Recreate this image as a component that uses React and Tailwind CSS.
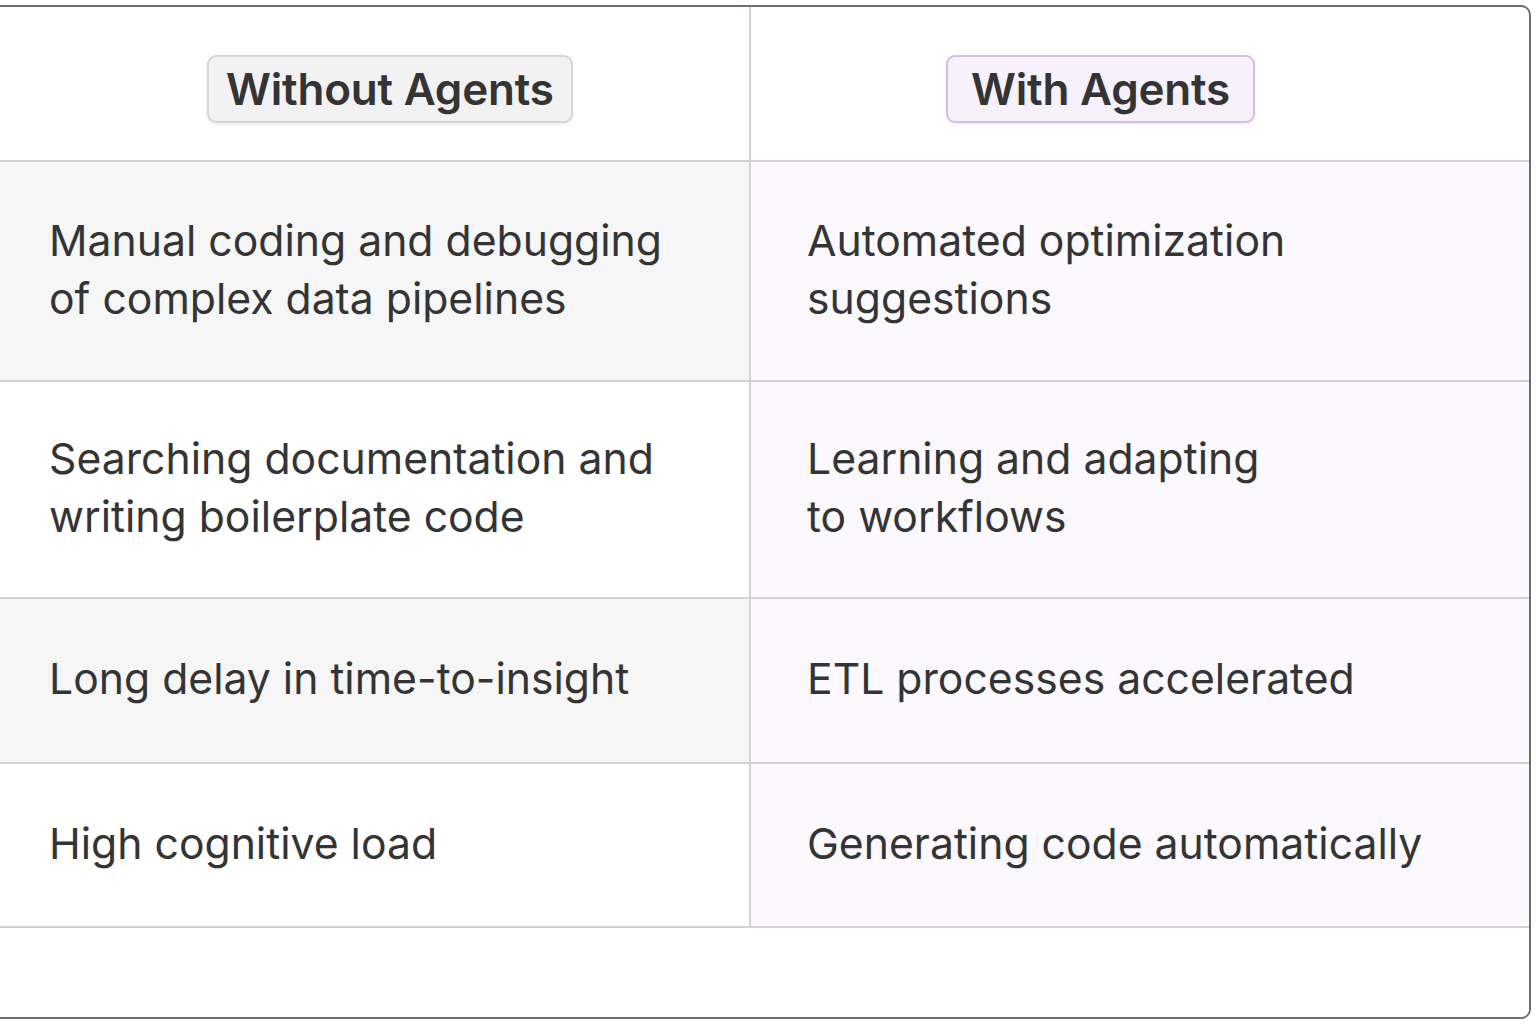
const ROWS = [
  {
    left: ["Manual coding and debugging", "of complex data pipelines"],
    right: ["Automated optimization", "suggestions"],
    h: "h-[220px]",
    shade: true,
  },
  {
    left: ["Searching documentation and", "writing boilerplate code"],
    right: ["Learning and adapting", "to workflows"],
    h: "h-[217px]",
    shade: false,
  },
  {
    left: ["Long delay in time-to-insight"],
    right: ["ETL processes accelerated"],
    h: "h-[165px]",
    shade: true,
  },
  {
    left: ["High cognitive load"],
    right: ["Generating code automatically"],
    h: "h-[164px]",
    shade: false,
  },
];

export default function App() {
  return (
    <div
      className="w-[1536px] h-[1024px] bg-white pt-[5px] text-[#343434]"
      style={{ fontFamily: "Inter, 'Noto Sans', sans-serif" }}
    >
      <div className="w-[1531px] h-[1014px] border-t-2 border-r-2 border-b-2 border-[#6b6e78] rounded-tr-[10px] rounded-br-[10px] flex flex-col overflow-hidden">
        <div className="grid grid-cols-[751px_1fr] h-[155px] border-b-2 border-[#d2d2d4]">
          <div className="flex items-center border-r-2 border-[#d2d2d4] pl-[207px] pt-[10px]">
            <span className="px-[17px] h-[68px] flex items-center rounded-[9px] bg-[#f2f2f2] border-2 border-[#d6d6d6] shadow-[0_2px_3px_rgba(0,0,0,0.06)] text-[44px] font-semibold tracking-[-0.2px]">
              Without Agents
            </span>
          </div>
          <div className="flex items-center pl-[195px] pt-[10px]">
            <span className="px-[23px] h-[68px] flex items-center rounded-[9px] bg-[#f7f0fd] border-2 border-[#d4bde9] shadow-[0_2px_3px_rgba(0,0,0,0.06)] text-[44px] font-semibold tracking-[-0.2px]">
              With Agents
            </span>
          </div>
        </div>
        {ROWS.map((row, i) => (
          <div
            key={i}
            className={`grid grid-cols-[751px_1fr] ${row.h} border-b-2 border-[#d2d2d4]`}
          >
            <div
              className={`flex flex-col justify-center border-r-2 border-[#d2d2d4] pl-[49px] pb-[3px] text-[42.7px] leading-[58px] ${
                row.shade ? "bg-[#f6f6f6]" : "bg-white"
              }`}
            >
              {row.left.map((t) => (
                <div key={t}>{t}</div>
              ))}
            </div>
            <div className="flex flex-col justify-center bg-[#fbf9fd] pl-[56px] pb-[3px] text-[42.7px] leading-[58px]">
              {row.right.map((t) => (
                <div key={t}>{t}</div>
              ))}
            </div>
          </div>
        ))}
        <div className="flex-1 bg-white" />
      </div>
    </div>
  );
}
